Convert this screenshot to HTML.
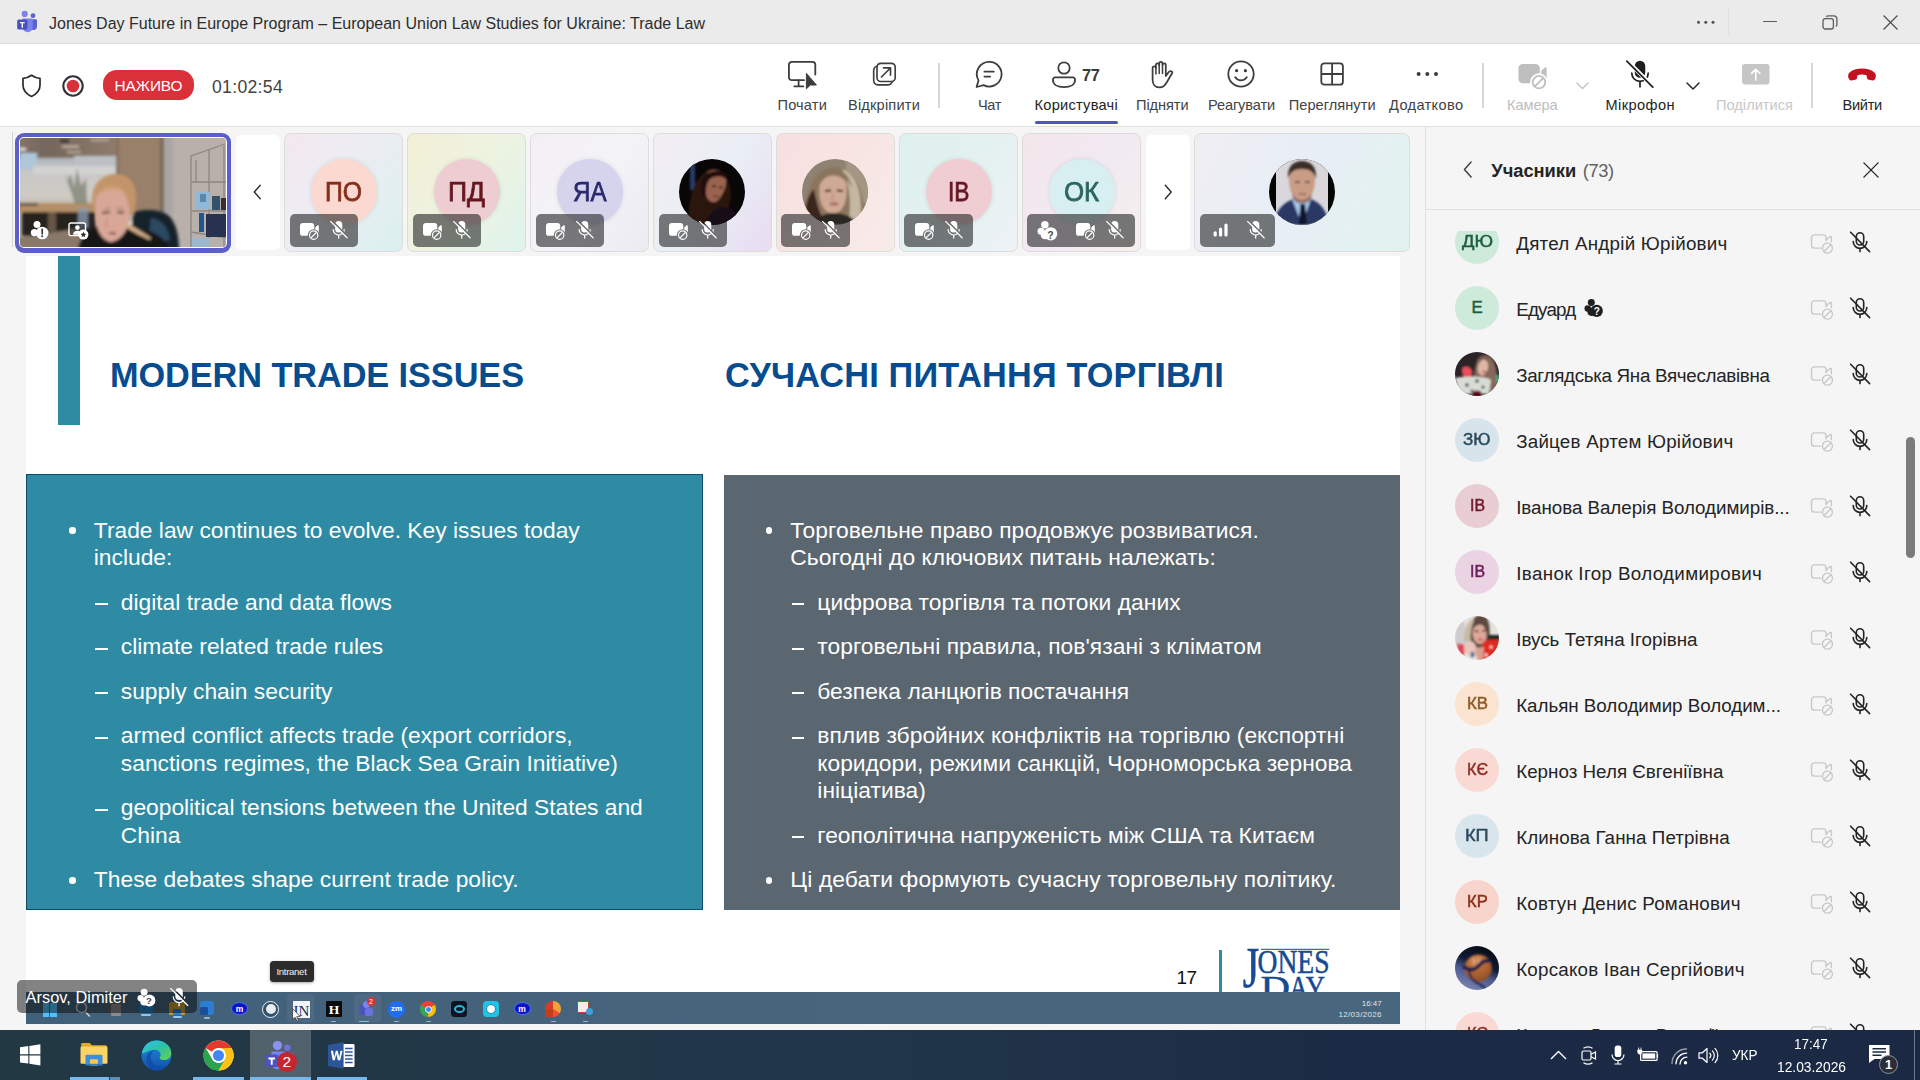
<!DOCTYPE html>
<html lang="uk"><head><meta charset="utf-8"><title>Teams</title>
<style>

*{box-sizing:border-box;margin:0;padding:0}
html,body{width:1920px;height:1080px;overflow:hidden}
body{position:relative;background:#f5f5f5;font-family:"Liberation Sans",sans-serif;color:#242424}
.a{position:absolute}
.t{position:absolute;white-space:nowrap}
svg{position:absolute;overflow:visible}
#titlebar{left:0;top:0;width:1920px;height:43px;background:#ebebeb}
#tbline{left:0;top:43px;width:1920px;height:1px;background:#dcdcdc}
#toolbar{left:0;top:44px;width:1920px;height:82px;background:#fff}
#toolline{left:0;top:126px;width:1920px;height:1px;background:#e0e0e0}
.vdiv{position:absolute;width:2px;background:#d6d6d6;top:63px;height:45px}
#slide{left:26px;top:256px;width:1374px;height:768px;background:#fff;overflow:hidden}
#panel{left:1426px;top:127px;width:494px;height:903px;background:#f5f5f5;overflow:hidden}
#panelline{left:1425px;top:127px;width:1px;height:903px;background:#e0e0e0}
#taskbar{left:0;top:1030px;width:1920px;height:50px;background:linear-gradient(90deg,#223843 0%,#21364a 45%,#1c2b45 70%,#1b2944 100%)}
.tile{position:absolute;top:133px;height:119px;border-radius:7px;border:1px solid #dcdcdc;overflow:hidden}
.av{position:absolute;border-radius:50%;text-align:center;overflow:hidden}
.pill{position:absolute;background:rgba(40,42,42,.62);border-radius:5px}

</style></head>
<body>

<svg width="0" height="0" style="position:absolute">
<defs>
<!-- mic off outline -->
<symbol id="i-micoff" viewBox="0 0 24 24">
 <g fill="none" stroke="currentColor" stroke-width="1.6" stroke-linecap="round" stroke-linejoin="round">
  <rect x="8.3" y="2.8" width="7.4" height="12.2" rx="3.7"/>
  <path d="M5.2 11.6a6.8 6.8 0 0 0 13.6 0"/>
  <path d="M12 18.6v3"/>
  <path d="M2.6 2.2L21.6 21.6"/>
 </g>
</symbol>
<!-- mic off filled (toolbar) -->
<symbol id="i-micoff-f" viewBox="0 0 28 28">
 <g fill="none" stroke="currentColor" stroke-width="1.7" stroke-linecap="round">
  <rect x="9.6" y="1.6" width="8.8" height="15.4" rx="4.4" fill="currentColor"/>
  <path d="M5.8 13.2a8.2 8.2 0 0 0 16.4 0"/>
  <path d="M14 21.6v5.2"/>
 </g>
 <path d="M1.2 0.8L27.2 26.8" stroke="#fff" stroke-width="4.2" stroke-linecap="round"/>
 <path d="M0.8 1.2L26.8 27.2" stroke="currentColor" stroke-width="1.7" stroke-linecap="round"/>
</symbol>
<!-- camera off outline (list) -->
<symbol id="i-camoff" viewBox="0 0 26 24">
 <g fill="none" stroke="currentColor" stroke-width="1.5" stroke-linejoin="round" stroke-linecap="round">
  <path d="M11.5 17.2H4.6a3 3 0 0 1-3-3V6.1a3 3 0 0 1 3-3h9.6a3 3 0 0 1 3 3v3.4"/>
  <path d="M17.2 8.2l4.4-3.4c.5-.4 1.2 0 1.200.6v5"/>
  <circle cx="18.6" cy="17.2" r="5.3"/>
  <path d="M14.9 20.9l7.4-7.4"/>
 </g>
</symbol>
<!-- camera off filled (tile / toolbar) -->
<symbol id="i-camoff-f" viewBox="0 0 20 18">
 <mask id="mk-cam"><rect x="-1" y="-1" width="22" height="20" fill="#fff"/><circle cx="14.100" cy="12.500" r="6.100" fill="#000"/></mask>
 <g mask="url(#mk-cam)" fill="currentColor">
  <rect x="0" y="0" width="14.700" height="13.200" rx="3"/>
  <path d="M15.700 4.700l2.500-2.300c.5-.5 1.200-.1 1.200.5v7.400c0 .6-.7 1-1.200.5l-2.500-2.300z"/>
 </g>
 <g fill="none" stroke="currentColor" stroke-width="1.250">
  <circle cx="14.100" cy="12.500" r="4.300"/>
  <path d="M11.100 15.500l6-6"/>
 </g>
</symbol>
<!-- mic off filled small (tiles) -->
<symbol id="i-micoff-w" viewBox="0 0 18 18">
 <mask id="mk-mic"><rect x="-1" y="-1" width="20" height="20" fill="#fff"/><path d="M1.600 -0.600L18.800 16.300" stroke="#000" stroke-width="1.700"/></mask>
 <g mask="url(#mk-mic)">
  <rect x="5.200" y="0" width="7.200" height="11.700" rx="3.600" fill="currentColor"/>
  <path d="M3.200 8.600a5.600 5.600 0 0 0 11.200 0M8.800 14.300v3.200" fill="none" stroke="currentColor" stroke-width="1.250" stroke-linecap="round"/>
 </g>
 <path d="M0.500 0.400L17.500 17.200" stroke="currentColor" stroke-width="1.250" stroke-linecap="round"/>
</symbol>
<!-- person with question badge -->
<symbol id="i-guest" viewBox="0 0 24 24">
 <circle cx="9" cy="5.4" r="4.3" fill="currentColor"/>
 <circle cx="4.600" cy="12.800" r="4" fill="currentColor"/>
 <circle cx="9.200" cy="17" r="5" fill="currentColor"/>
 <circle cx="15.600" cy="15.800" r="7.600" fill="currentColor"/>
</symbol>
<symbol id="i-chev-d" viewBox="0 0 14 8"><path d="M1 1l6 6 6-6" fill="none" stroke="currentColor" stroke-width="1.500" stroke-linecap="round" stroke-linejoin="round"/></symbol>
<symbol id="i-chev-l" viewBox="0 0 10 18"><path d="M8.500 1L1.500 9l7 8" fill="none" stroke="currentColor" stroke-width="1.600" stroke-linecap="round" stroke-linejoin="round"/></symbol>
<symbol id="i-chev-r" viewBox="0 0 10 18"><path d="M1.500 1L8.500 9l-7 8" fill="none" stroke="currentColor" stroke-width="1.600" stroke-linecap="round" stroke-linejoin="round"/></symbol>
<symbol id="i-x" viewBox="0 0 18 18"><path d="M1 1l16 16M17 1L1 17" fill="none" stroke="currentColor" stroke-width="1.500" stroke-linecap="round"/></symbol>
</defs>
</svg>

<div class="a" id="titlebar"></div><div class="a" id="tbline"></div>
<div class="a" id="toolbar"></div><div class="a" id="toolline"></div>
<svg class="a" style="left:15px;top:10px" width="24" height="23" viewBox="0 0 24 23">
 <circle cx="9.700" cy="3.900" r="3.100" fill="#7b83eb"/>
 <circle cx="18" cy="5.700" r="2.400" fill="#5b63d3"/>
 <path d="M14.500 9.300h6.300a1.200 1.200 0 0 1 1.200 1.200v5.800a3.700 3.700 0 0 1-3.700 3.700 3.700 3.700 0 0 1-3.800-3.400z" fill="#5b63d3"/>
 <path d="M7.600 8.600h8.800a1.300 1.300 0 0 1 1.300 1.300v7.300a5 5 0 0 1-10.100 0z" fill="#7b83eb"/>
 <rect x="2.200" y="9.400" width="10.200" height="10.200" rx="1.600" fill="#4850bf"/>
 <path d="M4.900 12h4.800v1.300H8v4.400H6.600v-4.400H4.900z" fill="#fff"/>
</svg>
<div class="t" style="left:49.00px;top:14.26px;font-size:16.00px;line-height:19.20px;letter-spacing:-0.004px;font-weight:400;color:#2e2e2e;font-family:'Liberation Sans',sans-serif;">Jones Day Future in Europe Program – European Union Law Studies for Ukraine: Trade Law</div>
<svg class="a" style="left:1696px;top:20px" width="20" height="5"><circle cx="2.500" cy="2.200" r="1.500" fill="#4f4f4f"/><circle cx="9.800" cy="2.200" r="1.500" fill="#4f4f4f"/><circle cx="17" cy="2.200" r="1.500" fill="#4f4f4f"/></svg>
<div class="a" style="left:1728px;top:8px;width:1px;height:26px;background:#dedede"></div>
<div class="a" style="left:1763px;top:20.500px;width:14px;height:1.300px;background:#5c5c5c"></div>
<svg class="a" style="left:1822px;top:14.500px" width="16" height="15" viewBox="0 0 16 15"><rect x="1" y="3.600" width="10.400" height="10.400" rx="2.300" fill="none" stroke="#5c5c5c" stroke-width="1.300"/><path d="M4.300 1.800A2.400 2.400 0 0 1 6.300 0.800h5.400a3.200 3.200 0 0 1 3.200 3.200v5.400a2.400 2.400 0 0 1-1 2" fill="none" stroke="#5c5c5c" stroke-width="1.300"/></svg>
<svg class="a" style="left:1882.500px;top:14.500px" width="15" height="15" viewBox="0 0 15 15"><path d="M0.500 0.500l14 14M14.500 0.500l-14 14" stroke="#505050" stroke-width="1.300" fill="none"/></svg>
<svg class="a" style="left:21px;top:74px" width="21" height="24" viewBox="0 0 21 24"><path d="M10.500 1.300c2.700 2 5.500 2.900 8.500 3v7c0 5-3.300 8.700-8.500 11.200C5.300 20 2 16.300 2 11.300v-7c3-.1 5.800-1 8.500-3z" fill="none" stroke="#2b2b2b" stroke-width="1.700" stroke-linejoin="round"/></svg>
<svg class="a" style="left:61px;top:74px" width="24" height="24" viewBox="0 0 24 24"><circle cx="12" cy="12" r="9.700" fill="#fff" stroke="#33333a" stroke-width="2.100"/><circle cx="12" cy="12" r="6.300" fill="#d6303a"/></svg>
<div class="a" style="left:103px;top:70px;width:91px;height:30px;border-radius:14px;background:#d93039"></div>
<div class="t" style="left:114.50px;top:77.02px;font-size:15.40px;line-height:18.48px;letter-spacing:-0.070px;font-weight:400;color:#fff;font-family:'Liberation Sans',sans-serif;">НАЖИВО</div>
<div class="t" style="left:212.00px;top:77.04px;font-size:17.60px;line-height:21.12px;letter-spacing:0.311px;font-weight:400;color:#424242;font-family:'Liberation Sans',sans-serif;">01:02:54</div>
<div class="t" style="left:777.50px;top:97.48px;font-size:14.60px;line-height:17.52px;letter-spacing:0.160px;font-weight:400;color:#424242;font-family:'Liberation Sans',sans-serif;">Почати</div>
<div class="t" style="left:848.00px;top:97.48px;font-size:14.60px;line-height:17.52px;letter-spacing:0.184px;font-weight:400;color:#424242;font-family:'Liberation Sans',sans-serif;">Відкріпити</div>
<div class="t" style="left:978.00px;top:97.48px;font-size:14.60px;line-height:17.52px;letter-spacing:-0.406px;font-weight:400;color:#424242;font-family:'Liberation Sans',sans-serif;">Чат</div>
<div class="t" style="left:1034.50px;top:97.48px;font-size:14.60px;line-height:17.52px;letter-spacing:0.264px;font-weight:400;color:#242424;font-family:'Liberation Sans',sans-serif;">Користувачі</div>
<div class="t" style="left:1136.00px;top:97.48px;font-size:14.60px;line-height:17.52px;letter-spacing:-0.081px;font-weight:400;color:#424242;font-family:'Liberation Sans',sans-serif;">Підняти</div>
<div class="t" style="left:1208.00px;top:97.48px;font-size:14.60px;line-height:17.52px;letter-spacing:-0.133px;font-weight:400;color:#424242;font-family:'Liberation Sans',sans-serif;">Реагувати</div>
<div class="t" style="left:1288.70px;top:97.48px;font-size:14.60px;line-height:17.52px;letter-spacing:0.046px;font-weight:400;color:#424242;font-family:'Liberation Sans',sans-serif;">Переглянути</div>
<div class="t" style="left:1389.00px;top:97.48px;font-size:14.60px;line-height:17.52px;letter-spacing:0.351px;font-weight:400;color:#424242;font-family:'Liberation Sans',sans-serif;">Додатково</div>
<div class="t" style="left:1507.00px;top:97.48px;font-size:14.60px;line-height:17.52px;letter-spacing:-0.087px;font-weight:400;color:#bdbdbd;font-family:'Liberation Sans',sans-serif;">Камера</div>
<div class="t" style="left:1605.50px;top:97.48px;font-size:14.60px;line-height:17.52px;letter-spacing:0.409px;font-weight:400;color:#242424;font-family:'Liberation Sans',sans-serif;">Мікрофон</div>
<div class="t" style="left:1716.00px;top:97.48px;font-size:14.60px;line-height:17.52px;letter-spacing:0.022px;font-weight:400;color:#c7c7c7;font-family:'Liberation Sans',sans-serif;">Поділитися</div>
<div class="t" style="left:1842.50px;top:97.48px;font-size:14.60px;line-height:17.52px;letter-spacing:-0.279px;font-weight:400;color:#242424;font-family:'Liberation Sans',sans-serif;">Вийти</div>
<div class="vdiv" style="left:938px"></div>
<div class="vdiv" style="left:1482px"></div>
<div class="vdiv" style="left:1810.5px"></div>
<div class="a" style="left:1034.500px;top:120.500px;width:83.500px;height:3px;border-radius:2px;background:#5057b8"></div>
<svg class="a" style="left:787px;top:60px" width="32" height="31" viewBox="0 0 32 31">
 <g fill="none" stroke="#3d3d3d" stroke-width="1.800" stroke-linecap="round" stroke-linejoin="round">
 <path d="M17 20.200H4.800A2.900 2.900 0 0 1 1.900 17.300V4.800A2.900 2.900 0 0 1 4.800 1.900h20.600a2.900 2.900 0 0 1 2.900 2.900v9.800"/>
 <path d="M11.600 20.400v5.800M7.300 26.400h9"/></g>
 <path d="M19.400 13.400v15.400l4-3.800h6z" fill="#3d3d3d" stroke="#3d3d3d" stroke-width="1" stroke-linejoin="round"/>
</svg>
<svg class="a" style="left:871px;top:61px" width="26" height="26" viewBox="0 0 26 26">
 <g fill="none" stroke="#3d3d3d" stroke-width="1.650" stroke-linecap="round" stroke-linejoin="round">
 <rect x="2.700" y="5.200" width="18.600" height="18.600" rx="4.200"/>
 <rect x="6" y="2.300" width="18.200" height="18.200" rx="3.800" fill="#fff"/>
 <path d="M10.400 16l9-9M12.500 6.900h7v7.300"/></g>
</svg>
<svg class="a" style="left:974px;top:60px" width="30" height="29" viewBox="0 0 30 29">
 <g fill="none" stroke="#3d3d3d" stroke-width="1.800" stroke-linecap="round" stroke-linejoin="round">
 <path d="M15.300 1.900a12.300 12.300 0 1 1-5.700 23.200L2.600 27l1.900-6.600A12.300 12.300 0 0 1 15.300 1.900z"/>
 <path d="M10.400 11.700h9.400M10.400 16.600h5.800"/></g>
</svg>
<svg class="a" style="left:1051px;top:60px" width="26" height="29" viewBox="0 0 26 29">
 <g fill="none" stroke="#3d3d3d" stroke-width="1.800" stroke-linejoin="round">
 <circle cx="13" cy="8" r="5.700"/>
 <path d="M4.200 17.400h17.600a2.300 2.300 0 0 1 2.300 2.300c0 4.800-4.600 7.400-11.100 7.400S1.900 24.500 1.900 19.700a2.300 2.300 0 0 1 2.300-2.300z"/></g>
</svg>
<div class="t" style="left:1082.00px;top:65.68px;font-size:16.40px;line-height:19.68px;letter-spacing:-0.371px;font-weight:700;color:#3b3b3b;font-family:'Liberation Sans',sans-serif;">77</div>
<svg class="a" style="left:1150px;top:60px" width="26" height="29" viewBox="0 0 26 29">
 <path fill="none" stroke="#3d3d3d" stroke-width="1.750" stroke-linecap="round" stroke-linejoin="round"
 d="M2.600 15.400V8a1.600 1.600 0 0 1 3.300 0V5a1.650 1.650 0 0 1 3.300 0V3.500a1.650 1.650 0 0 1 3.300 0V5a1.650 1.650 0 0 1 3.300 0v11l2.600-3.600c.8-1.100 2.200-1.500 3.400-.8.600.4.700 1 .3 1.600l-5.600 9.600c-1.400 2.500-3.400 4.600-6.600 4.600h-.8c-3.800 0-6.500-3-6.500-7.600z"/>
 <g fill="none" stroke="#3d3d3d" stroke-width="1.500" stroke-linecap="round"><path d="M5.900 8v6M9.200 5v8.600M12.500 5v8.600"/></g>
</svg>
<svg class="a" style="left:1226px;top:59px" width="30" height="30" viewBox="0 0 30 30">
 <circle cx="15" cy="15" r="12.700" fill="none" stroke="#3d3d3d" stroke-width="1.800"/>
 <circle cx="10.600" cy="11.700" r="1.600" fill="#3d3d3d"/><circle cx="19.400" cy="11.700" r="1.600" fill="#3d3d3d"/>
 <path d="M9.200 18.300a7 7 0 0 0 11.600 0" fill="none" stroke="#3d3d3d" stroke-width="1.800" stroke-linecap="round"/>
</svg>
<svg class="a" style="left:1319px;top:61px" width="26" height="26" viewBox="0 0 26 26">
 <g fill="none" stroke="#3d3d3d" stroke-width="1.800"><rect x="2.300" y="2.300" width="21.600" height="21.400" rx="3"/>
 <path d="M13.100 2.300v21.400M2.300 13h21.600"/></g></svg>
<svg class="a" style="left:1414px;top:70px" width="26" height="8"><circle cx="4.600" cy="4" r="2" fill="#3d3d3d"/><circle cx="13.300" cy="4" r="2" fill="#3d3d3d"/><circle cx="22" cy="4" r="2" fill="#3d3d3d"/></svg>
<svg class="a" style="left:1518.00px;top:63.80px;color:#bfbfbf;" width="30.00" height="26.20"><use href="#i-camoff-f" width="30.00" height="26.20"/></svg>
<svg class="a" style="left:1575.70px;top:82.00px;color:#c2c2c2;" width="13.00" height="7.40"><use href="#i-chev-d" width="13.00" height="7.40"/></svg>
<svg class="a" style="left:1626.00px;top:60.00px;color:#1f1f1f;" width="28.00" height="28.00"><use href="#i-micoff-f" width="28.00" height="28.00"/></svg>
<svg class="a" style="left:1686.00px;top:82.00px;color:#2b2b2b;" width="14.00" height="8.00"><use href="#i-chev-d" width="14.00" height="8.00"/></svg>
<svg class="a" style="left:1741.500px;top:64px" width="27.500" height="20.500" viewBox="0 0 27.500 20.500">
 <rect x="0" y="0" width="27.500" height="20.500" rx="3" fill="#c6c6c6"/>
 <path d="M13.750 16V5.600M9.600 9.400l4.150-4.100 4.150 4.100" fill="none" stroke="#fff" stroke-width="1.700" stroke-linecap="round" stroke-linejoin="round"/></svg>
<svg class="a" style="left:1848px;top:67.500px" width="28" height="13" viewBox="0 0 28 13">
 <path fill="#c4111f" d="M14 .6c5 0 9.700 1.400 12.600 4.200 1.300 1.300 1.700 3.400.9 5.200l-.5 1.100c-.4 1-1.400 1.500-2.400 1.300l-3.800-.7c-.9-.2-1.600-.9-1.800-1.800l-.5-2.600c-1.400-.6-2.900-.8-4.500-.8s-3.100.200-4.500.8l-.5 2.600c-.2.900-.9 1.600-1.800 1.800l-3.800.7c-1 .2-2-.3-2.400-1.300l-.5-1.100C-.3 8.200.1 6.100 1.400 4.800 4.300 2 9 .6 14 .6z"/></svg>
<div class="a" style="left:12px;top:132px;width:1px;height:115px;background:#d2d2d2"></div>
<div class="a" style="left:15px;top:133px;width:216px;height:119.500px;border-radius:9px;background:#5b5fc7"></div>
<div class="a" style="left:19px;top:137px;width:208px;height:111px;border-radius:5px;background:#fff"></div>
<svg class="a" style="left:20px;top:138px;border-radius:4px;overflow:hidden" width="206" height="109" viewBox="0 0 206 109">
<defs><filter id="b1" x="-10%" y="-10%" width="120%" height="120%"><feGaussianBlur stdDeviation="1.400"/></filter>
<filter id="b2" x="-10%" y="-10%" width="120%" height="120%"><feGaussianBlur stdDeviation="0.700"/></filter>
<linearGradient id="gl" x1="0" y1="0" x2="0" y2="1"><stop offset="0" stop-color="#aeb4ba"/><stop offset=".3" stop-color="#c8c8c8"/><stop offset=".8" stop-color="#cfcbc5"/><stop offset="1" stop-color="#c2b5a3"/></linearGradient>
<linearGradient id="ce" x1="0" y1="0" x2="1" y2="0"><stop offset="0" stop-color="#85766a"/><stop offset=".3" stop-color="#75665a"/><stop offset="1" stop-color="#8f7c6b"/></linearGradient></defs>
<rect width="206" height="109" fill="#b5ada6"/>
<g filter="url(#b1)">
 <rect x="-4" y="-4" width="102" height="28" fill="url(#ce)"/>
 <rect x="-4" y="20" width="100" height="48" fill="url(#gl)"/>
 <rect x="-4" y="10" width="10" height="2.500" fill="#e8e4de"/><rect x="42" y="7.500" width="17" height="2.200" fill="#c4b8ab"/><rect x="71" y="1" width="18" height="2" fill="#b8a99b"/><rect x="47" y="13" width="14" height="2" fill="#b5a79a"/>
 <rect x="40" y="1" width="9" height="4" fill="#3b3b38"/>
 <rect x="54" y="18" width="42" height="14" fill="#bcc0c5"/>
 <rect x="0" y="15" width="17" height="16" fill="#afc6da"/>
 <rect x="13" y="28" width="82" height="8" fill="#d9d8d6" opacity=".7"/>
 <rect x="96" y="-4" width="48" height="80" fill="#98806a"/>
 <rect x="96" y="-4" width="3" height="80" fill="#86705c"/>
 <rect x="140" y="-4" width="5" height="80" fill="#7b6958"/>
 <rect x="144" y="-4" width="66" height="117" fill="#b8b0a9"/>
 <rect x="144" y="-4" width="9" height="80" fill="#aaa5a5"/>
 <rect x="-4" y="65" width="100" height="10" fill="#b38f67"/>
 <rect x="-4" y="65" width="22" height="2.500" fill="#4a3c32"/>
 <rect x="2" y="74" width="74" height="24" fill="#26221f"/>
 <rect x="28" y="74" width="8" height="20" fill="#665647"/>
 <path d="M-4 100L62 90V113H-4z" fill="#8a7968"/>
 <path d="M44 34l4 8 3-6 3 14 3-20 4 18 5-8 1 26h-12l-6-18z" fill="#7e8072" opacity=".75"/>
 <rect x="58" y="70" width="10" height="20" fill="#8a9ab0" opacity=".8"/>
</g>
<g filter="url(#b2)" fill="none" stroke="#8b8782" stroke-width="1.300">
 <path d="M171 111V18l34-12M171 44h36M171 73h36M171 94l36 6M189 12v100M176 22v22M204 8v100"/>
</g>
<g filter="url(#b2)">
 <rect x="176" y="54" width="14" height="17" fill="#8fb9d8"/><rect x="180" y="56" width="6" height="8" fill="#5a86ad"/><rect x="192" y="58" width="8" height="14" fill="#33536e"/><rect x="201" y="60" width="5" height="12" fill="#3a2f33"/>
 <rect x="179" y="75" width="5" height="19" fill="#235690"/><rect x="186" y="76" width="22" height="23" fill="#283350"/>
 <rect x="172" y="100" width="18" height="9" fill="#9db7cf"/>
</g>
<g filter="url(#b1)">
 <path d="M114 74c14-4 31-2 37 6 6 8 8 20 8 33h-52z" fill="#19212a"/>
 <path d="M131 80c10 1 17 9 19 22l-22 3z" fill="#2b4862"/>
 <path d="M58 113c2-12 8-22 20-26l42 4c16 2 26 10 30 22z" fill="#141518"/>
 <path d="M72 62c0-17 11-26 24-26 12 0 20 8 20 24 0 6-1 12-3 16l-38 0z" fill="#c3946b"/>
 <path d="M76 58c6-8 19-9 27-5 6 10 8 22 6 32-3 10-10 18-18 19-8-1-14-10-16-24z" fill="#d9a797"/>
 <path d="M76 60c5-8 18-10 28-6-4-8-22-10-28 6z" fill="#cfa078"/>
 <path d="M106 84c8 5 18 11 25 16l-1 2c-9-4-19-9-26-14z" fill="#d2ad88"/>
 <circle cx="110.500" cy="85" r="1.800" fill="#efe3dc"/>
 <path d="M82 75l8-1M97 74l7 .5" stroke="#4d3c3a" stroke-width="2"/>
 <path d="M84 71l7-1.500M96 69.500l8 1" stroke="#9c7a5c" stroke-width="1.200"/>
 <path d="M89 95l7 .5" stroke="#7e3f3f" stroke-width="2.200"/>
 <path d="M88 80l-3 8 4 1" stroke="#c48f80" stroke-width="1.500" fill="none"/>
</g>
</svg>
<svg class="a" style="left:30px;top:220px" width="20" height="20" viewBox="0 0 20 20">
 <circle cx="7" cy="4.600" r="3.500" fill="#fff"/><circle cx="4.400" cy="12.600" r="3.600" fill="#fff"/>
 <circle cx="12.200" cy="13" r="6.300" fill="#fff"/><path d="M12.200 9.400v4.400" stroke="#3a3a3a" stroke-width="1.700" stroke-linecap="round"/><circle cx="12.200" cy="16.200" r="1" fill="#3a3a3a"/></svg>
<svg class="a" style="left:68px;top:222px" width="22" height="19" viewBox="0 0 22 19">
 <rect x="1" y="1" width="16.500" height="12.600" rx="1.800" fill="rgba(40,40,40,.55)" stroke="#fff" stroke-width="1.400"/>
 <circle cx="9.400" cy="5.600" r="2.300" fill="#fff"/><path d="M5 12.800c0-2.800 1.800-4 4.400-4s4.400 1.200 4.400 4z" fill="#fff"/>
 <circle cx="15.400" cy="12.600" r="5" fill="#fff"/><path d="M15.400 9.700l.9 1.900 2 .3-1.500 1.400.4 2-1.800-1-1.800 1 .4-2-1.500-1.400 2-.3z" fill="#333"/></svg>
<div class="a" style="left:235.500px;top:135px;width:44px;height:115px;border-radius:5px;background:#fff"></div>
<svg class="a" style="left:252.50px;top:184.00px;color:#2b2b2b;" width="8.50" height="16.00"><use href="#i-chev-l" width="8.50" height="16.00"/></svg>
<div class="a" style="left:1146px;top:135px;width:44px;height:115px;border-radius:5px;background:#fff"></div>
<svg class="a" style="left:1164.00px;top:184.00px;color:#2b2b2b;" width="8.50" height="16.00"><use href="#i-chev-r" width="8.50" height="16.00"/></svg>
<div class="tile" style="left:284px;width:119px;background:linear-gradient(125deg,#f3e8ee 0%,#edecf3 40%,#e3eff1 75%,#d9f0ee 100%)"></div>
<div class="av" style="left:310.5px;top:159px;width:66px;height:66px;background:#fbd9d1;box-shadow:0 0 5px rgba(0,0,0,.10)"></div>
<div class="t" style="left:325.00px;top:176.13px;font-size:26.80px;line-height:32.16px;letter-spacing:0.000px;font-weight:400;color:#84301a;font-family:'Liberation Sans',sans-serif;transform:scaleX(0.9225);transform-origin:0 50%;-webkit-text-stroke:0.750px #84301a;">ПО</div>
<div class="tile" style="left:407px;width:119px;background:linear-gradient(125deg,#f3efd6 0%,#eef3e0 45%,#dff3ec 100%)"></div>
<div class="av" style="left:433.5px;top:159px;width:66px;height:66px;background:#eecdd2;box-shadow:0 0 5px rgba(0,0,0,.10)"></div>
<div class="t" style="left:448.00px;top:176.13px;font-size:26.80px;line-height:32.16px;letter-spacing:0.000px;font-weight:400;color:#66161f;font-family:'Liberation Sans',sans-serif;transform:scaleX(0.9890);transform-origin:0 50%;-webkit-text-stroke:0.750px #66161f;">ПД</div>
<div class="tile" style="left:530px;width:119px;background:linear-gradient(125deg,#f3f0f5 0%,#f4f3f7 50%,#ecebf3 100%)"></div>
<div class="av" style="left:556.5px;top:159px;width:66px;height:66px;background:#d6d4ec;box-shadow:0 0 5px rgba(0,0,0,.10)"></div>
<div class="t" style="left:572.75px;top:176.13px;font-size:26.80px;line-height:32.16px;letter-spacing:0.000px;font-weight:400;color:#2b2a6e;font-family:'Liberation Sans',sans-serif;transform:scaleX(0.8998);transform-origin:0 50%;-webkit-text-stroke:0.750px #2b2a6e;">ЯА</div>
<div class="tile" style="left:653px;width:119px;background:linear-gradient(125deg,#f3eef4 0%,#eaeef5 50%,#e8dcf1 100%)"></div>
<div class="tile" style="left:776px;width:119px;background:linear-gradient(125deg,#f7dfe1 0%,#f7e6e3 55%,#f7ecea 100%)"></div>
<div class="tile" style="left:899px;width:119px;background:linear-gradient(125deg,#dff1ef 0%,#e3f1f0 45%,#eef2f6 100%)"></div>
<div class="av" style="left:925.5px;top:159px;width:66px;height:66px;background:#efcdd2;box-shadow:0 0 5px rgba(0,0,0,.10)"></div>
<div class="t" style="left:947.75px;top:176.13px;font-size:26.80px;line-height:32.16px;letter-spacing:0.000px;font-weight:400;color:#651524;font-family:'Liberation Sans',sans-serif;transform:scaleX(0.8491);transform-origin:0 50%;-webkit-text-stroke:0.750px #651524;">ІВ</div>
<div class="tile" style="left:1022px;width:119px;background:linear-gradient(125deg,#f4e6ea 0%,#f1e9f3 50%,#f5f0ec 100%)"></div>
<div class="av" style="left:1048.5px;top:159px;width:66px;height:66px;background:#d8eff2;box-shadow:0 0 5px rgba(0,0,0,.10)"></div>
<div class="t" style="left:1063.90px;top:176.13px;font-size:26.80px;line-height:32.16px;letter-spacing:0.000px;font-weight:400;color:#2a665f;font-family:'Liberation Sans',sans-serif;transform:scaleX(0.9655);transform-origin:0 50%;-webkit-text-stroke:0.750px #2a665f;">ОК</div>
<div class="tile" style="left:1194px;width:216px;background:linear-gradient(115deg,#f0eef3 0%,#e8eef6 45%,#e1f3ee 100%)"></div>
<div class="pill" style="left:290.2px;top:214px;width:67.7px;height:33px"></div>
<div class="pill" style="left:413.1px;top:214px;width:67.8px;height:33px"></div>
<div class="pill" style="left:536.1px;top:214px;width:67.8px;height:33px"></div>
<div class="pill" style="left:659.1px;top:214px;width:67.7px;height:33px"></div>
<div class="pill" style="left:781.3px;top:214px;width:68.5px;height:33px"></div>
<div class="pill" style="left:904.1px;top:214px;width:68.8px;height:33px"></div>
<div class="pill" style="left:1027.0px;top:214px;width:108.0px;height:33px"></div>
<div class="pill" style="left:1200.2px;top:214px;width:74.8px;height:33px"></div>
<svg class="a" style="left:679px;top:159px" width="66" height="66" viewBox="0 0 66 66"><defs><clipPath id="c4"><circle cx="33" cy="33" r="33"/></clipPath><filter id="b3"><feGaussianBlur stdDeviation="1.200"/></filter></defs>
<g clip-path="url(#c4)"><rect width="66" height="66" fill="#080607"/><g filter="url(#b3)">
<rect x="11" y="5" width="5" height="26" fill="#2c3a68"/>
<path d="M10 66c-2-22 4-50 22-56 14-2 20 12 20 28l-6 28z" fill="#2b1611"/>
<path d="M27 14c6-5 16-3 19 4 2 8-1 18-6 24-5 3-10 0-12-6-2-7-3-16-1-22z" fill="#9a6450" transform="rotate(8 36 26)"/>
<path d="M22 24c2-12 18-16 26-8l1 6c-5-6-12-6-18-2-4 4-5 12-3 22-4-4-7-10-6-18z" fill="#24110c"/>
<path d="M33 27l4 .5M40 28l4 1" stroke="#2a1510" stroke-width="1.300"/><path d="M34 37l6 1" stroke="#6f3a34" stroke-width="1.500"/>
<path d="M26 66c2-10 8-16 16-18l10 2c6 4 8 10 8 16z" fill="#151113"/></g></g></svg>
<svg class="a" style="left:802px;top:159px" width="66" height="66" viewBox="0 0 66 66"><defs><clipPath id="c5"><circle cx="33" cy="33" r="33"/></clipPath></defs>
<g clip-path="url(#c5)"><rect width="66" height="66" fill="#8e8272"/><g filter="url(#b3)">
<rect x="44" y="0" width="24" height="44" fill="#a39683"/>
<path d="M4 66c-4-26 4-56 28-58 22 0 32 26 30 58z" fill="#8c765f"/>
<path d="M40 10c14 4 22 24 18 56h-12c4-20 2-40-6-56z" fill="#c4b8a2"/>
<path d="M4 66c-2-14 0-28 8-36 2 12 6 26 12 36z" fill="#3a281f"/>
<path d="M18 24c4-10 22-10 26 0 2 10 0 22-6 28-4 3-10 3-14 0-6-6-8-18-6-28z" fill="#cfa993"/>
<path d="M14 34c0-18 10-24 18-24s16 6 18 20c-4-10-10-14-18-14s-14 6-18 18z" fill="#8a745e"/>
<path d="M10 66c4-8 12-12 22-12s20 4 24 12z" fill="#2a2523"/>
<path d="M23 32l6-.5M35 31.500l6 .5" stroke="#3e2a22" stroke-width="1.800"/><path d="M28 45l8 0" stroke="#a0605a" stroke-width="2.400"/><path d="M31 34l-1 7 3 .5" stroke="#b78f7c" stroke-width="1.200" fill="none"/></g></g></svg>
<svg class="a" style="left:1269px;top:159px" width="66" height="66" viewBox="0 0 66 66"><defs><clipPath id="c8"><circle cx="33" cy="33" r="33"/></clipPath></defs>
<g clip-path="url(#c8)"><rect width="66" height="66" fill="#050506"/><rect x="7" y="0" width="52" height="66" fill="#d9d7dc"/><g filter="url(#b3)">
<path d="M4 66c2-14 10-22 20-26l18 0c10 4 16 12 18 26z" fill="#2b3964"/>
<path d="M23 40l10 26 9-26z" fill="#a6c6ec"/><path d="M31.500 45h4.500l2 21h-8.500z" fill="#10182f"/>
<path d="M20 20c0-9 6-14 13-14s13 5 13 14c0 10-3 20-13 24-10-4-13-14-13-24z" fill="#c99c86"/>
<path d="M19 20c-1-12 5-18 14-18s15 6 14 18c-2-7-6-10-14-10s-12 3-14 10z" fill="#3a2d28"/>
<path d="M23 34c4 9 16 9 20 0l-1 6c-4 6-14 6-18 0z" fill="#94756a"/>
<path d="M26 23l5 0M36 23l5 0" stroke="#4b3a34" stroke-width="1.500"/><path d="M30 35l7 0" stroke="#8e5a52" stroke-width="1.300"/></g></g></svg>
<svg class="a" style="left:299.80px;top:223.00px;color:#fff;" width="19.40" height="17.50"><use href="#i-camoff-f" width="19.40" height="17.50"/></svg>
<svg class="a" style="left:330.00px;top:221.00px;color:#fff;" width="17.80" height="17.80"><use href="#i-micoff-w" width="17.80" height="17.80"/></svg>
<svg class="a" style="left:422.80px;top:223.00px;color:#fff;" width="19.40" height="17.50"><use href="#i-camoff-f" width="19.40" height="17.50"/></svg>
<svg class="a" style="left:453.00px;top:221.00px;color:#fff;" width="17.80" height="17.80"><use href="#i-micoff-w" width="17.80" height="17.80"/></svg>
<svg class="a" style="left:545.80px;top:223.00px;color:#fff;" width="19.40" height="17.50"><use href="#i-camoff-f" width="19.40" height="17.50"/></svg>
<svg class="a" style="left:576.00px;top:221.00px;color:#fff;" width="17.80" height="17.80"><use href="#i-micoff-w" width="17.80" height="17.80"/></svg>
<svg class="a" style="left:668.80px;top:223.00px;color:#fff;" width="19.40" height="17.50"><use href="#i-camoff-f" width="19.40" height="17.50"/></svg>
<svg class="a" style="left:699.00px;top:221.00px;color:#fff;" width="17.80" height="17.80"><use href="#i-micoff-w" width="17.80" height="17.80"/></svg>
<svg class="a" style="left:791.80px;top:223.00px;color:#fff;" width="19.40" height="17.50"><use href="#i-camoff-f" width="19.40" height="17.50"/></svg>
<svg class="a" style="left:822.00px;top:221.00px;color:#fff;" width="17.80" height="17.80"><use href="#i-micoff-w" width="17.80" height="17.80"/></svg>
<svg class="a" style="left:914.80px;top:223.00px;color:#fff;" width="19.40" height="17.50"><use href="#i-camoff-f" width="19.40" height="17.50"/></svg>
<svg class="a" style="left:945.00px;top:221.00px;color:#fff;" width="17.80" height="17.80"><use href="#i-micoff-w" width="17.80" height="17.80"/></svg>
<svg class="a" style="left:1037.00px;top:220.00px;color:#fff;" width="21.00" height="21.00"><use href="#i-guest" width="21.00" height="21.00"/></svg>
<div class="t" style="left:1047.29px;top:229.06px;font-size:10.50px;line-height:12.60px;letter-spacing:0.000px;font-weight:700;color:#4a4a4a;font-family:'Liberation Sans',sans-serif;">?</div>
<svg class="a" style="left:1076.00px;top:223.00px;color:#fff;" width="19.40" height="17.50"><use href="#i-camoff-f" width="19.40" height="17.50"/></svg>
<svg class="a" style="left:1106.00px;top:221.00px;color:#fff;" width="17.80" height="17.80"><use href="#i-micoff-w" width="17.80" height="17.80"/></svg>
<svg class="a" style="left:1212px;top:222px" width="18" height="16" viewBox="0 0 18 16"><g stroke="#fff" stroke-width="3.200" stroke-linecap="round"><path d="M3.200 13V10.800M8.600 13V7.200M14 13V3"/></g></svg>
<svg class="a" style="left:1247.00px;top:221.00px;color:#fff;" width="17.80" height="17.80"><use href="#i-micoff-w" width="17.80" height="17.80"/></svg>
<div class="a" id="slide"></div>
<div class="a" style="left:58px;top:256px;width:22px;height:169px;background:#2e8ba1"></div>
<div class="t" style="left:110.00px;top:354.54px;font-size:34.30px;line-height:41.16px;letter-spacing:-0.077px;font-weight:700;color:#064c8f;font-family:'Liberation Sans',sans-serif;">MODERN TRADE ISSUES</div>
<div class="t" style="left:725.00px;top:354.54px;font-size:34.30px;line-height:41.16px;letter-spacing:0.166px;font-weight:700;color:#064c8f;font-family:'Liberation Sans',sans-serif;">СУЧАСНІ ПИТАННЯ ТОРГІВЛІ</div>
<div class="a" style="left:26px;top:474px;width:677px;height:436px;background:#2e8ba3;border:1.500px solid #0f4a6a"></div>
<div class="a" style="left:724px;top:475px;width:676px;height:435px;background:#5a6670"></div>
<div class="t" style="left:93.80px;top:516.52px;font-size:22.80px;line-height:27.36px;letter-spacing:0.004px;font-weight:400;color:#fff;font-family:'Liberation Sans',sans-serif;">Trade law continues to evolve. Key issues today</div>
<div class="a" style="left:69.3px;top:527.4px;width:6.400px;height:6.400px;border-radius:50%;background:#fff"></div>
<div class="t" style="left:93.80px;top:543.92px;font-size:22.80px;line-height:27.36px;letter-spacing:0.000px;font-weight:400;color:#fff;font-family:'Liberation Sans',sans-serif;">include:</div>
<div class="t" style="left:120.80px;top:588.52px;font-size:22.80px;line-height:27.36px;letter-spacing:0.000px;font-weight:400;color:#fff;font-family:'Liberation Sans',sans-serif;">digital trade and data flows</div>
<div class="a" style="left:95.2px;top:603.0px;width:12.600px;height:2px;background:#fff"></div>
<div class="t" style="left:120.80px;top:633.12px;font-size:22.80px;line-height:27.36px;letter-spacing:0.000px;font-weight:400;color:#fff;font-family:'Liberation Sans',sans-serif;">climate related trade rules</div>
<div class="a" style="left:95.2px;top:648.0px;width:12.600px;height:2px;background:#fff"></div>
<div class="t" style="left:120.80px;top:677.72px;font-size:22.80px;line-height:27.36px;letter-spacing:0.000px;font-weight:400;color:#fff;font-family:'Liberation Sans',sans-serif;">supply chain security</div>
<div class="a" style="left:95.2px;top:692.0px;width:12.600px;height:2px;background:#fff"></div>
<div class="t" style="left:120.80px;top:722.32px;font-size:22.80px;line-height:27.36px;letter-spacing:0.000px;font-weight:400;color:#fff;font-family:'Liberation Sans',sans-serif;">armed conflict affects trade (export corridors,</div>
<div class="a" style="left:95.2px;top:737.0px;width:12.600px;height:2px;background:#fff"></div>
<div class="t" style="left:120.80px;top:749.72px;font-size:22.80px;line-height:27.36px;letter-spacing:0.005px;font-weight:400;color:#fff;font-family:'Liberation Sans',sans-serif;">sanctions regimes, the Black Sea Grain Initiative)</div>
<div class="t" style="left:120.80px;top:794.32px;font-size:22.80px;line-height:27.36px;letter-spacing:-0.029px;font-weight:400;color:#fff;font-family:'Liberation Sans',sans-serif;">geopolitical tensions between the United States and</div>
<div class="a" style="left:95.2px;top:809.0px;width:12.600px;height:2px;background:#fff"></div>
<div class="t" style="left:120.80px;top:821.72px;font-size:22.80px;line-height:27.36px;letter-spacing:0.000px;font-weight:400;color:#fff;font-family:'Liberation Sans',sans-serif;">China</div>
<div class="t" style="left:93.80px;top:866.32px;font-size:22.80px;line-height:27.36px;letter-spacing:0.020px;font-weight:400;color:#fff;font-family:'Liberation Sans',sans-serif;">These debates shape current trade policy.</div>
<div class="a" style="left:69.3px;top:877.2px;width:6.400px;height:6.400px;border-radius:50%;background:#fff"></div>
<div class="t" style="left:790.30px;top:516.52px;font-size:22.80px;line-height:27.36px;letter-spacing:0.098px;font-weight:400;color:#fff;font-family:'Liberation Sans',sans-serif;">Торговельне право продовжує розвиватися.</div>
<div class="a" style="left:765.8px;top:527.4px;width:6.400px;height:6.400px;border-radius:50%;background:#fff"></div>
<div class="t" style="left:790.30px;top:543.92px;font-size:22.80px;line-height:27.36px;letter-spacing:0.050px;font-weight:400;color:#fff;font-family:'Liberation Sans',sans-serif;">Сьогодні до ключових питань належать:</div>
<div class="t" style="left:817.30px;top:588.52px;font-size:22.80px;line-height:27.36px;letter-spacing:0.055px;font-weight:400;color:#fff;font-family:'Liberation Sans',sans-serif;">цифрова торгівля та потоки даних</div>
<div class="a" style="left:791.6px;top:603.0px;width:12.600px;height:2px;background:#fff"></div>
<div class="t" style="left:817.30px;top:633.12px;font-size:22.80px;line-height:27.36px;letter-spacing:0.035px;font-weight:400;color:#fff;font-family:'Liberation Sans',sans-serif;">торговельні правила, пов'язані з кліматом</div>
<div class="a" style="left:791.6px;top:648.0px;width:12.600px;height:2px;background:#fff"></div>
<div class="t" style="left:817.30px;top:677.72px;font-size:22.80px;line-height:27.36px;letter-spacing:0.019px;font-weight:400;color:#fff;font-family:'Liberation Sans',sans-serif;">безпека ланцюгів постачання</div>
<div class="a" style="left:791.6px;top:692.0px;width:12.600px;height:2px;background:#fff"></div>
<div class="t" style="left:817.30px;top:722.32px;font-size:22.80px;line-height:27.36px;letter-spacing:0.026px;font-weight:400;color:#fff;font-family:'Liberation Sans',sans-serif;">вплив збройних конфліктів на торгівлю (експортні</div>
<div class="a" style="left:791.6px;top:737.0px;width:12.600px;height:2px;background:#fff"></div>
<div class="t" style="left:817.30px;top:749.72px;font-size:22.80px;line-height:27.36px;letter-spacing:-0.016px;font-weight:400;color:#fff;font-family:'Liberation Sans',sans-serif;">коридори, режими санкцій, Чорноморська зернова</div>
<div class="t" style="left:817.30px;top:777.12px;font-size:22.80px;line-height:27.36px;letter-spacing:0.024px;font-weight:400;color:#fff;font-family:'Liberation Sans',sans-serif;">ініціатива)</div>
<div class="t" style="left:817.30px;top:821.72px;font-size:22.80px;line-height:27.36px;letter-spacing:0.023px;font-weight:400;color:#fff;font-family:'Liberation Sans',sans-serif;">геополітична напруженість між США та Китаєм</div>
<div class="a" style="left:791.6px;top:836.0px;width:12.600px;height:2px;background:#fff"></div>
<div class="t" style="left:790.30px;top:866.32px;font-size:22.80px;line-height:27.36px;letter-spacing:0.106px;font-weight:400;color:#fff;font-family:'Liberation Sans',sans-serif;">Ці дебати формують сучасну торговельну політику.</div>
<div class="a" style="left:765.8px;top:877.2px;width:6.400px;height:6.400px;border-radius:50%;background:#fff"></div>
<div class="t" style="left:1176.60px;top:967.11px;font-size:18.90px;line-height:22.68px;letter-spacing:-0.612px;font-weight:400;color:#111;font-family:'Liberation Sans',sans-serif;">17</div>
<div class="a" style="left:1219.200px;top:950px;width:2.600px;height:43px;background:#2e8ba1"></div>
<svg class="a" style="left:1236px;top:940px;overflow:hidden" width="104" height="52" viewBox="1236 940 104 52">
<g font-family="'Liberation Serif',serif" fill="#164a92" stroke="#164a92" stroke-width=".500">
<text x="1242.800" y="987" font-size="58" textLength="16.500" lengthAdjust="spacingAndGlyphs">J</text>
<text x="1257.500" y="972.800" font-size="32.800" textLength="72" lengthAdjust="spacingAndGlyphs">ONES</text>
<text x="1260.500" y="998.800" font-size="34.200" textLength="29.500" lengthAdjust="spacingAndGlyphs">D</text>
<text x="1289" y="998.800" font-size="32.800" textLength="36" lengthAdjust="spacingAndGlyphs">AY</text>
</g><rect x="1261" y="948.800" width="68.300" height="1" fill="#164a92"/></svg>
<div class="a" style="left:26px;top:992px;width:1374px;height:32px;background:linear-gradient(90deg,#41607a 0%,#46647c 50%,#48667d 100%)"></div>
<div class="t" style="left:1361.80px;top:998.83px;font-size:8.00px;line-height:9.60px;letter-spacing:-0.044px;font-weight:400;color:#dfe6ec;font-family:'Liberation Sans',sans-serif;">16:47</div>
<div class="t" style="left:1338.50px;top:1010.43px;font-size:8.00px;line-height:9.60px;letter-spacing:0.326px;font-weight:400;color:#dfe6ec;font-family:'Liberation Sans',sans-serif;">12/03/2026</div>
<div class="a" style="left:42.5px;top:1003.0px;width:6.8px;height:6.8px;background:#4cc2ff;border-radius:0.5px;"></div>
<div class="a" style="left:49.8px;top:1003.0px;width:6.8px;height:6.8px;background:#4cc2ff;border-radius:0.5px;"></div>
<div class="a" style="left:42.5px;top:1010.3px;width:6.8px;height:6.8px;background:#4cc2ff;border-radius:0.5px;"></div>
<div class="a" style="left:49.8px;top:1010.3px;width:6.8px;height:6.8px;background:#4cc2ff;border-radius:0.5px;"></div>
<svg class="a" style="left:75px;top:1001px" width="16" height="17"><circle cx="6.500" cy="6.500" r="5" fill="none" stroke="#c7d0d8" stroke-width="1.500"/><path d="M10.200 10.500l4.600 5" stroke="#c7d0d8" stroke-width="1.600"/></svg>
<div class="a" style="left:107.0px;top:1002.0px;width:11.0px;height:12.0px;background:#5c5c60;border-radius:1.0px;"></div>
<div class="a" style="left:111.0px;top:1004.0px;width:10.0px;height:12.0px;background:#8a8a8f;border-radius:1.0px;"></div>
<div class="a" style="left:139.0px;top:1001.0px;width:14.0px;height:12.0px;background:#1f7fc4;border-radius:2.0px;"></div>
<div class="a" style="left:141.0px;top:1014.0px;width:10.0px;height:1.5px;background:#8fc7ee;border-radius:1.0px;"></div>
<div class="a" style="left:169.0px;top:1002.0px;width:16.0px;height:13.0px;background:#c79a2d;border-radius:1.5px;"></div>
<div class="a" style="left:173.0px;top:1009.0px;width:8.0px;height:6.0px;background:#2b7bd0;border-radius:1.0px;"></div>
<div class="a" style="left:173.0px;top:1016.0px;width:9.0px;height:1.5px;background:#8fc7ee;border-radius:1.0px;"></div>
<div class="a" style="left:200.0px;top:1001.0px;width:14.0px;height:14.0px;background:#2b7cd3;border-radius:2.5px;"></div>
<div class="a" style="left:200.0px;top:1007.0px;width:8.0px;height:8.0px;background:#1a4f9c;border-radius:1.5px;"></div>
<div class="a" style="left:204.0px;top:1017.0px;width:6.0px;height:1.5px;background:#9fb3c4;border-radius:1.0px;"></div>
<div class="a" style="left:231px;top:1002px;width:17px;height:13px;border-radius:50%;background:#1111c8;border:1px solid #3f74ef"></div>
<div class="t" style="left:235.72px;top:1003.75px;font-size:8.50px;line-height:10.20px;letter-spacing:0.000px;font-weight:700;color:#fff;font-family:'Liberation Sans',sans-serif;">m</div>
<div class="a" style="left:262px;top:1000.500px;width:17px;height:17px;border-radius:50%;background:#31506a;border:1.400px solid #eef2f5"></div><div class="a" style="left:265.500px;top:1004px;width:10px;height:10px;border-radius:50%;background:#e8ecee"></div>
<div class="a" style="left:287.0px;top:994.0px;width:27.0px;height:28.0px;background:rgba(255,255,255,.055);border-radius:3.0px;"></div>
<div class="a" style="left:293.0px;top:1001.0px;width:17.0px;height:17.0px;background:#f3f5f8;border-radius:0.5px;"></div>
<div class="t" style="left:293.50px;top:1001.80px;font-size:15.00px;line-height:18.00px;letter-spacing:0.086px;font-weight:400;color:#16305e;font-family:'Liberation Serif',serif;">IN</div>
<div class="a" style="left:326.0px;top:1001.0px;width:16.0px;height:16.0px;background:#0b0b0b;border-radius:1.0px;"></div>
<div class="t" style="left:328.75px;top:1001.72px;font-size:13.50px;line-height:16.20px;letter-spacing:0.000px;font-weight:700;color:#fff;font-family:'Liberation Serif',serif;">H</div>
<div class="a" style="left:331.0px;top:1020.5px;width:5.0px;height:1.5px;background:#9fb3c4;border-radius:1.0px;"></div>
<div class="a" style="left:354.0px;top:994.0px;width:27.0px;height:28.0px;background:rgba(255,255,255,.055);border-radius:3.0px;"></div>
<div class="a" style="left:359.0px;top:1005.0px;width:9.0px;height:10.0px;background:#4b53bc;border-radius:2.0px;"></div>
<div class="a" style="left:363px;top:1001px;width:7px;height:7px;border-radius:50%;background:#7b83eb"></div>
<div class="a" style="left:365.0px;top:1008.0px;width:8.0px;height:8.0px;background:#6a72dd;border-radius:2.0px;"></div>
<div class="a" style="left:366.500px;top:997px;width:9px;height:9px;border-radius:50%;background:#d13438"></div>
<div class="t" style="left:369.05px;top:997.67px;font-size:7.00px;line-height:8.40px;letter-spacing:0.000px;font-weight:400;color:#fff;font-family:'Liberation Sans',sans-serif;">2</div>
<div class="a" style="left:359.0px;top:1020.5px;width:10.0px;height:1.8px;background:#7fc3ef;border-radius:1.0px;"></div>
<div class="a" style="left:388px;top:1000.500px;width:17px;height:17px;border-radius:50%;background:#1f6df2"></div>
<div class="t" style="left:390.94px;top:1003.93px;font-size:8.00px;line-height:9.60px;letter-spacing:0.000px;font-weight:700;color:#fff;font-family:'Liberation Sans',sans-serif;">zm</div>
<div class="a" style="left:394.0px;top:1020.5px;width:5.0px;height:1.5px;background:#9fb3c4;border-radius:1.0px;"></div>
<div class="a" style="left:420px;top:1001px;width:16px;height:16px;border-radius:50%;background:conic-gradient(from -60deg,#ea4335 0 120deg,#fbbc05 0 240deg,#34a853 0 360deg)"></div><div class="a" style="left:424.500px;top:1005.500px;width:7px;height:7px;border-radius:50%;background:#4285f4;border:1.200px solid #fff"></div>
<div class="a" style="left:425.5px;top:1020.5px;width:5.0px;height:1.5px;background:#9fb3c4;border-radius:1.0px;"></div>
<div class="a" style="left:451.0px;top:1001.0px;width:16.0px;height:16.0px;background:#0b1420;border-radius:3.5px;"></div>
<div class="a" style="left:453.500px;top:1005px;width:11px;height:8px;border-radius:50%;border:2px solid #23b8e8"></div>
<div class="a" style="left:482.500px;top:1001px;width:16px;height:16px;border-radius:4px;background:#21c2e8"></div><div class="a" style="left:485.500px;top:1004px;width:10px;height:10px;border-radius:50%;background:#fff;border:1.500px solid #1390b8"></div>
<div class="a" style="left:513.500px;top:1002px;width:17px;height:13px;border-radius:50%;background:#1111c8;border:1px solid #3f74ef"></div>
<div class="t" style="left:518.22px;top:1003.75px;font-size:8.50px;line-height:10.20px;letter-spacing:0.000px;font-weight:700;color:#fff;font-family:'Liberation Sans',sans-serif;">m</div>
<div class="a" style="left:545px;top:1001px;width:16px;height:16px;border-radius:50%;background:conic-gradient(#f4a23b 0 120deg,#e8532e 0 250deg,#d83b2b 0 360deg)"></div>
<div class="a" style="left:545.0px;top:1009.0px;width:8.0px;height:8.0px;background:#c43e1c;border-radius:1.5px;"></div>
<div class="a" style="left:550.5px;top:1020.5px;width:5.0px;height:1.5px;background:#9fb3c4;border-radius:1.0px;"></div>
<div class="a" style="left:577.0px;top:1001.0px;width:12.0px;height:12.0px;background:#f2efe9;border-radius:1.5px;border:1.500px solid #c73a2a"></div>
<div class="a" style="left:586px;top:1008px;width:7px;height:7px;border-radius:50%;background:#3aa0d8"></div>
<div class="a" style="left:582.5px;top:1020.5px;width:5.0px;height:1.5px;background:#9fb3c4;border-radius:1.0px;"></div>
<div class="a" style="left:269.500px;top:961px;width:44px;height:21px;border-radius:3.500px;background:#2c2c2c;box-shadow:0 1px 3px rgba(0,0,0,.35)"></div>
<div class="t" style="left:276.50px;top:965.91px;font-size:9.60px;line-height:11.52px;letter-spacing:-0.319px;font-weight:400;color:#f2f2f2;font-family:'Liberation Sans',sans-serif;">Intranet</div>
<div class="a" style="left:17px;top:980px;width:180px;height:33px;border-radius:5px;background:rgba(8,8,8,.5)"></div>
<div class="t" style="left:25.50px;top:987.68px;font-size:16.40px;line-height:19.68px;letter-spacing:0.018px;font-weight:400;color:#fff;font-family:'Liberation Sans',sans-serif;">Arsov, Dimiter</div>
<svg class="a" style="left:136.50px;top:987.50px;color:#fff;" width="19.00" height="19.00"><use href="#i-guest" width="19.00" height="19.00"/></svg>
<div class="t" style="left:145.90px;top:995.31px;font-size:9.50px;line-height:11.40px;letter-spacing:0.000px;font-weight:700;color:#444;font-family:'Liberation Sans',sans-serif;">?</div>
<svg class="a" style="left:169.50px;top:987.50px;color:#fff;" width="18.50" height="18.50"><use href="#i-micoff-w" width="18.50" height="18.50"/></svg>
<svg class="a" style="left:291.500px;top:1008px" width="9" height="14" viewBox="0 0 9 14"><path d="M.6.6v11l2.600-2.400 1.800 4 1.500-.7-1.800-3.900h3.500z" fill="#fff" stroke="#222" stroke-width=".700"/></svg>
<div class="a" id="panelline"></div>
<svg class="a" style="left:1462.80px;top:161.30px;color:#424242;" width="9.50" height="17.00"><use href="#i-chev-l" width="9.50" height="17.00"/></svg>
<div class="t" style="left:1491.30px;top:159.68px;font-size:18.30px;line-height:21.96px;letter-spacing:-0.010px;font-weight:700;color:#242424;font-family:'Liberation Sans',sans-serif;">Учасники</div>
<div class="t" style="left:1582.70px;top:159.68px;font-size:18.30px;line-height:21.96px;letter-spacing:-0.386px;font-weight:400;color:#616161;font-family:'Liberation Sans',sans-serif;">(73)</div>
<svg class="a" style="left:1863.00px;top:162.00px;color:#242424;" width="16.00" height="16.00"><use href="#i-x" width="16.00" height="16.00"/></svg>
<div class="a" style="left:1426px;top:209px;width:494px;height:1px;background:#e0e0e0"></div>
<div class="a" style="left:1426px;top:231px;width:494px;height:799px;overflow:hidden">
<div class="av" style="left:29.0px;top:-11.0px;width:44px;height:44px;background:#cdeadb"></div>
<div class="t" style="left:35.50px;top:1.40px;font-size:16.80px;line-height:20.16px;letter-spacing:0.000px;font-weight:400;color:#1d5e42;font-family:'Liberation Sans',sans-serif;transform:scaleX(1.0935);transform-origin:0 50%;-webkit-text-stroke:0.500px #1d5e42;">ДЮ</div>
<div class="t" style="left:90.20px;top:2.01px;font-size:18.80px;line-height:22.56px;letter-spacing:0.245px;font-weight:400;color:#242424;font-family:'Liberation Sans',sans-serif;">Дятел Андрій Юрійович</div>
<svg class="a" style="left:383.80px;top:0.50px;color:#c9c9c9;" width="24.40" height="22.50"><use href="#i-camoff" width="24.40" height="22.50"/></svg>
<svg class="a" style="left:421.50px;top:-1.30px;color:#242424;" width="24.00" height="24.00"><use href="#i-micoff" width="24.00" height="24.00"/></svg>
<div class="av" style="left:29.0px;top:55.0px;width:44px;height:44px;background:#cdeadb"></div>
<div class="t" style="left:45.40px;top:67.40px;font-size:16.80px;line-height:20.16px;letter-spacing:0.000px;font-weight:400;color:#1d5e42;font-family:'Liberation Sans',sans-serif;-webkit-text-stroke:0.500px #1d5e42;">Е</div>
<div class="t" style="left:90.20px;top:68.01px;font-size:18.80px;line-height:22.56px;letter-spacing:-0.808px;font-weight:400;color:#242424;font-family:'Liberation Sans',sans-serif;">Едуард</div>
<svg class="a" style="left:158.30px;top:66.50px;color:#1f1f1f;" width="19.50" height="19.50"><use href="#i-guest" width="19.50" height="19.50"/></svg>
<div class="t" style="left:167.65px;top:75.14px;font-size:10.00px;line-height:12.00px;letter-spacing:0.000px;font-weight:700;color:#fff;font-family:'Liberation Sans',sans-serif;">?</div>
<svg class="a" style="left:383.80px;top:66.50px;color:#c9c9c9;" width="24.40" height="22.50"><use href="#i-camoff" width="24.40" height="22.50"/></svg>
<svg class="a" style="left:421.50px;top:64.70px;color:#242424;" width="24.00" height="24.00"><use href="#i-micoff" width="24.00" height="24.00"/></svg>
<svg class="a" style="left:29.0px;top:121.0px" width="44" height="44" viewBox="0 0 44 44"><defs><clipPath id="cp3"><circle cx="22" cy="22" r="22"/></clipPath><filter id="bp"><feGaussianBlur stdDeviation="0.900"/></filter></defs>
<g clip-path="url(#cp3)"><rect width="44" height="44" fill="#2a2226"/><g filter="url(#bp)">
<path d="M19 30c0-16 3-27 11-27 9 0 13 12 12 36l-10 2z" fill="#86675a"/>
<ellipse cx="28" cy="15.500" rx="5" ry="8" fill="#e0b7a6" transform="rotate(12 28 15.500)"/>
<path d="M24 10c3-4 8-4 10 0l-1-5c-3-2-7-2-9 1z" fill="#7a5a4c"/>
<path d="M27 19.500l4 .5" stroke="#b23a44" stroke-width="1.600"/>
<path d="M7 16c3-3 8-2 10 2 1 4-1 8-4 11-4-2-7-7-6-13z" fill="#ea4d5c"/>
<path d="M0 26c6-2 12 0 18-2 6 2 12 0 18 4l-2 14H4z" fill="#d8dcd6"/>
<circle cx="12" cy="33" r="1.800" fill="#2f4a3a"/><circle cx="22" cy="29" r="1.800" fill="#2f4a3a"/><circle cx="28" cy="35" r="1.600" fill="#2f4a3a"/><circle cx="17" cy="39" r="1.500" fill="#3a3a3a"/>
<rect x="41" y="23" width="4" height="8" fill="#2aa878"/>
<ellipse cx="22" cy="42" rx="5" ry="3.500" fill="#5a1020"/></g></g></svg>
<div class="t" style="left:90.20px;top:134.01px;font-size:18.80px;line-height:22.56px;letter-spacing:-0.308px;font-weight:400;color:#242424;font-family:'Liberation Sans',sans-serif;">Заглядська Яна Вячеславівна</div>
<svg class="a" style="left:383.80px;top:132.50px;color:#c9c9c9;" width="24.40" height="22.50"><use href="#i-camoff" width="24.40" height="22.50"/></svg>
<svg class="a" style="left:421.50px;top:130.70px;color:#242424;" width="24.00" height="24.00"><use href="#i-micoff" width="24.00" height="24.00"/></svg>
<div class="av" style="left:29.0px;top:187.0px;width:44px;height:44px;background:#d8e4ec"></div>
<div class="t" style="left:37.25px;top:199.40px;font-size:16.80px;line-height:20.16px;letter-spacing:0.000px;font-weight:400;color:#2c4a5e;font-family:'Liberation Sans',sans-serif;transform:scaleX(1.0141);transform-origin:0 50%;-webkit-text-stroke:0.500px #2c4a5e;">ЗЮ</div>
<div class="t" style="left:90.20px;top:200.01px;font-size:18.80px;line-height:22.56px;letter-spacing:0.215px;font-weight:400;color:#242424;font-family:'Liberation Sans',sans-serif;">Зайцев Артем Юрійович</div>
<svg class="a" style="left:383.80px;top:198.50px;color:#c9c9c9;" width="24.40" height="22.50"><use href="#i-camoff" width="24.40" height="22.50"/></svg>
<svg class="a" style="left:421.50px;top:196.70px;color:#242424;" width="24.00" height="24.00"><use href="#i-micoff" width="24.00" height="24.00"/></svg>
<div class="av" style="left:29.0px;top:253.0px;width:44px;height:44px;background:#e8cdd3"></div>
<div class="t" style="left:43.50px;top:265.40px;font-size:16.80px;line-height:20.16px;letter-spacing:0.000px;font-weight:400;color:#6e1c2c;font-family:'Liberation Sans',sans-serif;transform:scaleX(0.9450);transform-origin:0 50%;-webkit-text-stroke:0.500px #6e1c2c;">ІВ</div>
<div class="t" style="left:90.20px;top:266.01px;font-size:18.80px;line-height:22.56px;letter-spacing:-0.047px;font-weight:400;color:#242424;font-family:'Liberation Sans',sans-serif;">Іванова Валерія Володимирів...</div>
<svg class="a" style="left:383.80px;top:264.50px;color:#c9c9c9;" width="24.40" height="22.50"><use href="#i-camoff" width="24.40" height="22.50"/></svg>
<svg class="a" style="left:421.50px;top:262.70px;color:#242424;" width="24.00" height="24.00"><use href="#i-micoff" width="24.00" height="24.00"/></svg>
<div class="av" style="left:29.0px;top:319.0px;width:44px;height:44px;background:#ead3e3"></div>
<div class="t" style="left:43.50px;top:331.40px;font-size:16.80px;line-height:20.16px;letter-spacing:0.000px;font-weight:400;color:#6b1f5a;font-family:'Liberation Sans',sans-serif;transform:scaleX(0.9450);transform-origin:0 50%;-webkit-text-stroke:0.500px #6b1f5a;">ІВ</div>
<div class="t" style="left:90.20px;top:332.01px;font-size:18.80px;line-height:22.56px;letter-spacing:0.354px;font-weight:400;color:#242424;font-family:'Liberation Sans',sans-serif;">Іванок Ігор Володимирович</div>
<svg class="a" style="left:383.80px;top:330.50px;color:#c9c9c9;" width="24.40" height="22.50"><use href="#i-camoff" width="24.40" height="22.50"/></svg>
<svg class="a" style="left:421.50px;top:328.70px;color:#242424;" width="24.00" height="24.00"><use href="#i-micoff" width="24.00" height="24.00"/></svg>
<svg class="a" style="left:29.0px;top:385.0px" width="44" height="44" viewBox="0 0 44 44"><defs><clipPath id="cp7"><circle cx="22" cy="22" r="22"/></clipPath></defs>
<g clip-path="url(#cp7)"><rect width="44" height="44" fill="#e6e2de"/><g filter="url(#bp)">
<rect x="0" y="6" width="10" height="24" fill="#cfccd0"/>
<path d="M15 30c-2-18 2-31 11-31 8 0 10 12 8 28l-6 6z" fill="#5b4a3c"/>
<path d="M9 26c0-12 3-20 8-23l2 2c-3 6-4 14-3 22z" fill="#c9b9a2"/>
<ellipse cx="24.500" cy="18" rx="7" ry="10" fill="#dfa999" transform="rotate(-8 24.500 18)"/>
<path d="M18 13c3-5 10-6 14-2-2-5-6-7-10-6-3 1-4 4-4 8z" fill="#5b4a3c"/>
<path d="M19.500 15l4 .5M27 15l4-.5" stroke="#4a332c" stroke-width="1.300"/>
<path d="M23 23.500l4.500 0" stroke="#c4525a" stroke-width="2"/>
<rect x="33" y="19" width="12" height="5" fill="#1c2a26"/>
<path d="M28 26c5-3 11-3 17-2v22H24z" fill="#df2a20"/>
<path d="M2 28c3-1 6 0 8 2l-1 10-6-2z" fill="#e0475a"/>
<path d="M18 32l5 12h5l1-13z" fill="#d8a090"/>
<ellipse cx="15" cy="32" rx="6" ry="7" fill="#e6c6be"/>
<ellipse cx="17.500" cy="38.500" rx="2" ry="3" fill="#5f6f8e"/>
<circle cx="36" cy="31" r="1.500" fill="#f0d8d0"/><circle cx="31" cy="39" r="1.800" fill="#f0d8d0"/></g></g></svg>
<div class="t" style="left:90.20px;top:398.01px;font-size:18.80px;line-height:22.56px;letter-spacing:0.019px;font-weight:400;color:#242424;font-family:'Liberation Sans',sans-serif;">Івусь Тетяна Ігорівна</div>
<svg class="a" style="left:383.80px;top:396.50px;color:#c9c9c9;" width="24.40" height="22.50"><use href="#i-camoff" width="24.40" height="22.50"/></svg>
<svg class="a" style="left:421.50px;top:394.70px;color:#242424;" width="24.00" height="24.00"><use href="#i-micoff" width="24.00" height="24.00"/></svg>
<div class="av" style="left:29.0px;top:451.0px;width:44px;height:44px;background:#fbe4cf"></div>
<div class="t" style="left:40.50px;top:463.40px;font-size:16.80px;line-height:20.16px;letter-spacing:0.000px;font-weight:400;color:#8f5a24;font-family:'Liberation Sans',sans-serif;transform:scaleX(1.0004);transform-origin:0 50%;-webkit-text-stroke:0.500px #8f5a24;">КВ</div>
<div class="t" style="left:90.20px;top:464.01px;font-size:18.80px;line-height:22.56px;letter-spacing:-0.041px;font-weight:400;color:#242424;font-family:'Liberation Sans',sans-serif;">Кальян Володимир Володим...</div>
<svg class="a" style="left:383.80px;top:462.50px;color:#c9c9c9;" width="24.40" height="22.50"><use href="#i-camoff" width="24.40" height="22.50"/></svg>
<svg class="a" style="left:421.50px;top:460.70px;color:#242424;" width="24.00" height="24.00"><use href="#i-micoff" width="24.00" height="24.00"/></svg>
<div class="av" style="left:29.0px;top:517.0px;width:44px;height:44px;background:#fad9d4"></div>
<div class="t" style="left:40.50px;top:529.40px;font-size:16.80px;line-height:20.16px;letter-spacing:0.000px;font-weight:400;color:#8c2f22;font-family:'Liberation Sans',sans-serif;transform:scaleX(0.9606);transform-origin:0 50%;-webkit-text-stroke:0.500px #8c2f22;">КЄ</div>
<div class="t" style="left:90.20px;top:530.01px;font-size:18.80px;line-height:22.56px;letter-spacing:0.013px;font-weight:400;color:#242424;font-family:'Liberation Sans',sans-serif;">Керноз Неля Євгеніївна</div>
<svg class="a" style="left:383.80px;top:528.50px;color:#c9c9c9;" width="24.40" height="22.50"><use href="#i-camoff" width="24.40" height="22.50"/></svg>
<svg class="a" style="left:421.50px;top:526.70px;color:#242424;" width="24.00" height="24.00"><use href="#i-micoff" width="24.00" height="24.00"/></svg>
<div class="av" style="left:29.0px;top:583.0px;width:44px;height:44px;background:#d8e5ec"></div>
<div class="t" style="left:39.15px;top:595.40px;font-size:16.80px;line-height:20.16px;letter-spacing:0.000px;font-weight:400;color:#2c4a5e;font-family:'Liberation Sans',sans-serif;transform:scaleX(1.0841);transform-origin:0 50%;-webkit-text-stroke:0.500px #2c4a5e;">КП</div>
<div class="t" style="left:90.20px;top:596.01px;font-size:18.80px;line-height:22.56px;letter-spacing:0.075px;font-weight:400;color:#242424;font-family:'Liberation Sans',sans-serif;">Клинова Ганна Петрівна</div>
<svg class="a" style="left:383.80px;top:594.50px;color:#c9c9c9;" width="24.40" height="22.50"><use href="#i-camoff" width="24.40" height="22.50"/></svg>
<svg class="a" style="left:421.50px;top:592.70px;color:#242424;" width="24.00" height="24.00"><use href="#i-micoff" width="24.00" height="24.00"/></svg>
<div class="av" style="left:29.0px;top:649.0px;width:44px;height:44px;background:#f7d5cd"></div>
<div class="t" style="left:40.65px;top:661.40px;font-size:16.80px;line-height:20.16px;letter-spacing:0.000px;font-weight:400;color:#8c2f14;font-family:'Liberation Sans',sans-serif;transform:scaleX(0.9861);transform-origin:0 50%;-webkit-text-stroke:0.500px #8c2f14;">КР</div>
<div class="t" style="left:90.20px;top:662.01px;font-size:18.80px;line-height:22.56px;letter-spacing:0.210px;font-weight:400;color:#242424;font-family:'Liberation Sans',sans-serif;">Ковтун Денис Романович</div>
<svg class="a" style="left:383.80px;top:660.50px;color:#c9c9c9;" width="24.40" height="22.50"><use href="#i-camoff" width="24.40" height="22.50"/></svg>
<svg class="a" style="left:421.50px;top:658.70px;color:#242424;" width="24.00" height="24.00"><use href="#i-micoff" width="24.00" height="24.00"/></svg>
<svg class="a" style="left:29.0px;top:715.0px" width="44" height="44" viewBox="0 0 44 44"><defs><clipPath id="cp12"><circle cx="22" cy="22" r="22"/></clipPath>
<linearGradient id="vbg" x1=".7" y1="0" x2=".3" y2="1"><stop offset="0" stop-color="#070b16"/><stop offset=".4" stop-color="#111a33"/><stop offset=".62" stop-color="#4c5a8c"/><stop offset="1" stop-color="#7d86b4"/></linearGradient>
<radialGradient id="vball" cx=".42" cy=".25" r=".8"><stop offset="0" stop-color="#e9b694"/><stop offset=".3" stop-color="#c0703a"/><stop offset="1" stop-color="#8e4a22"/></radialGradient></defs>
<g clip-path="url(#cp12)"><rect width="44" height="44" fill="url(#vbg)"/><g filter="url(#bp)">
<circle cx="23.300" cy="22" r="13.600" fill="url(#vball)"/>
<path d="M9.500 21c5 4 10 3 14-1 4-5 8-6 11-5" fill="none" stroke="#141d4a" stroke-width="3.600" stroke-linecap="round"/>
<path d="M14 24c0 6 4 11 9 13l7 5" fill="none" stroke="#1a214a" stroke-width="2" stroke-linecap="round"/>
<path d="M20 9.500c2 3 2 8 0 12" fill="none" stroke="#9a5428" stroke-width="1"/></g></g></svg>
<div class="t" style="left:90.20px;top:728.01px;font-size:18.80px;line-height:22.56px;letter-spacing:0.215px;font-weight:400;color:#242424;font-family:'Liberation Sans',sans-serif;">Корсаков Іван Сергійович</div>
<svg class="a" style="left:383.80px;top:726.50px;color:#c9c9c9;" width="24.40" height="22.50"><use href="#i-camoff" width="24.40" height="22.50"/></svg>
<svg class="a" style="left:421.50px;top:724.70px;color:#242424;" width="24.00" height="24.00"><use href="#i-micoff" width="24.00" height="24.00"/></svg>
<div class="av" style="left:29.0px;top:781.0px;width:44px;height:44px;background:#fad9d4"></div>
<div class="t" style="left:40.50px;top:793.40px;font-size:16.80px;line-height:20.16px;letter-spacing:0.000px;font-weight:400;color:#8c2f22;font-family:'Liberation Sans',sans-serif;transform:scaleX(0.9664);transform-origin:0 50%;-webkit-text-stroke:0.500px #8c2f22;">КС</div>
<div class="t" style="left:90.20px;top:794.01px;font-size:18.80px;line-height:22.56px;letter-spacing:-0.411px;font-weight:400;color:#242424;font-family:'Liberation Sans',sans-serif;">Косенко Дарина Валеріївна</div>
<svg class="a" style="left:383.80px;top:792.50px;color:#c9c9c9;" width="24.40" height="22.50"><use href="#i-camoff" width="24.40" height="22.50"/></svg>
<svg class="a" style="left:421.50px;top:790.70px;color:#242424;" width="24.00" height="24.00"><use href="#i-micoff" width="24.00" height="24.00"/></svg>
</div>
<div class="a" style="left:1906px;top:437px;width:9px;height:121px;border-radius:4.500px;background:#7b7b7b"></div>
<div class="a" id="taskbar"></div>
<div class="a" style="left:250px;top:1030px;width:61px;height:50px;background:rgba(255,255,255,.21)"></div>
<div class="a" style="left:69.5px;top:1077px;width:39.0px;height:3px;background:#76b9ed"></div>
<div class="a" style="left:109.5px;top:1077px;width:10.5px;height:3px;background:#5d8fb9"></div>
<div class="a" style="left:193.0px;top:1077px;width:50.7px;height:3px;background:#76b9ed"></div>
<div class="a" style="left:250.0px;top:1077px;width:61.0px;height:3px;background:#76b9ed"></div>
<div class="a" style="left:316.8px;top:1077px;width:50.7px;height:3px;background:#76b9ed"></div>
<div class="a" style="left:108.500px;top:1077px;width:1px;height:3px;background:#2a4456"></div>
<svg class="a" style="left:20px;top:1044px" width="21" height="22" viewBox="0 0 21 22"><g fill="#fff">
<path d="M0 3.300l8.300-1.200v8.200H0z"/><path d="M9.400 1.900L20.400.300v10H9.400z"/><path d="M0 11.400h8.300v8.200L0 18.400z"/><path d="M9.400 11.400h11v10l-11-1.600z"/></g></svg>
<svg class="a" style="left:80px;top:1042px" width="28" height="24" viewBox="0 0 28 24">
<path d="M1.200 2.200a1.200 1.200 0 0 1 1.200-1.200h7.400l2.200 2.200h13.600a1.200 1.200 0 0 1 1.200 1.200v2H1.200z" fill="#e2a928"/>
<rect x="0.500" y="4.600" width="27" height="17.200" rx="1.200" fill="#fbd463"/>
<path d="M5.500 21.800v-8a1 1 0 0 1 1-1h15a1 1 0 0 1 1 1v8h-4.700v-4.200H10.200v4.200z" fill="#3b8de0"/>
<rect x="10.200" y="17.600" width="7.600" height="6" fill="#f7c948"/><rect x="5.500" y="21.800" width="17" height="1.700" fill="#2f78c8"/></svg>
<svg class="a" style="left:140.500px;top:1039.500px" width="31" height="31" viewBox="0 0 31 31"><defs>
<linearGradient id="eg1" x1="0" y1="0" x2="1" y2="1"><stop offset="0" stop-color="#35c1f1"/><stop offset=".5" stop-color="#2bc3a5"/><stop offset="1" stop-color="#6ad04a"/></linearGradient>
<linearGradient id="eg2" x1="0" y1="0" x2="0" y2="1"><stop offset="0" stop-color="#1c8fe0"/><stop offset="1" stop-color="#144fa8"/></linearGradient></defs>
<circle cx="15.500" cy="15.500" r="15" fill="url(#eg2)"/>
<path d="M.8 13.600C2 5.800 8 .5 15.500.5c8.500 0 14.800 6 14.800 12.600 0 4.400-3.200 7-7 7-3 0-4.600-1.200-4.600-2.400 0-1 1-1.400 1-3.200 0-2.600-2.600-4.800-6-4.800-5 0-9.600 3.200-12.900 3.900z" fill="url(#eg1)"/>
<path d="M12 30c-4.600-2.200-6.800-6.600-6.800-10.600 0-5 4-8.600 8.400-9.500-2.600 1.600-3.800 4.200-3.800 6.800 0 6 5.200 10 11 10 2.200 0 4.200-.6 5.600-1.400-2.800 3.800-8.400 7-14.400 4.700z" fill="#0f4ea8" opacity=".85"/></svg>
<svg class="a" style="left:202.500px;top:1039.500px" width="31" height="31" viewBox="0 0 31 31">
<circle cx="15.500" cy="15.500" r="15" fill="#fff"/>
<path d="M15.500.5a15 15 0 0 1 13 7.500H15.500a7.500 7.500 0 0 0-6.500 3.750L2.500 8A15 15 0 0 1 15.500.5z" fill="#e33b2e"/>
<path d="M28.500 8a15 15 0 0 1-13 22.500l6.500-11.250A7.500 7.500 0 0 0 22 11.750L28.500 8z" fill="#fbc116" transform="rotate(0 15.500 15.500)"/>
<path d="M28.500 8H15.500a7.500 7.500 0 0 1 6.500 11.250L15.500 30.500A15 15 0 0 0 28.500 8z" fill="#fbc116"/>
<path d="M2.500 8l6.500 11.250a7.500 7.500 0 0 0 6.500 3.750l-0 7.500A15 15 0 0 1 2.500 8z" fill="#2ba24c"/>
<path d="M9 19.250a7.500 7.500 0 0 0 13 0L15.500 30.500A15 15 0 0 1 2.500 8z" fill="#2ba24c"/>
<circle cx="15.500" cy="15.500" r="6.900" fill="#fff"/><circle cx="15.500" cy="15.500" r="5.500" fill="#4285f4"/></svg>
<svg class="a" style="left:265px;top:1040px" width="32" height="31" viewBox="0 0 32 31">
<circle cx="12.400" cy="5.600" r="4.600" fill="#8b92f0"/><circle cx="22.400" cy="7.800" r="3.300" fill="#6c73de"/>
<path d="M19 12.600h8.400a1.500 1.500 0 0 1 1.500 1.500v7.400a5 5 0 0 1-5 5 5 5 0 0 1-4.900-3.400z" fill="#5a61d0"/>
<path d="M6.500 11.400h12a1.700 1.700 0 0 1 1.700 1.700V22a7.200 7.200 0 0 1-13.700 3z" fill="#7b83eb"/>
<rect x="0" y="14.400" width="13.400" height="12.600" rx="1.800" fill="#4b53bc"/>
<path d="M3.400 17.600h6.600v1.800H7.700v5.400H5.800v-5.400H3.400z" fill="#fff"/></svg>
<div class="a" style="left:277px;top:1052px;width:19.500px;height:19.500px;border-radius:50%;background:#c4262e"></div>
<div class="t" style="left:282.44px;top:1052.63px;font-size:15.50px;line-height:18.60px;letter-spacing:0.000px;font-weight:400;color:#fff;font-family:'Liberation Sans',sans-serif;">2</div>
<svg class="a" style="left:328px;top:1041.500px" width="27" height="27" viewBox="0 0 27 27">
<rect x="8" y="2" width="18.500" height="23" rx="1.200" fill="#fff"/>
<g stroke="#2b579a" stroke-width="1.500"><path d="M17 6.600h7.600M17 10h7.600M17 13.500h7.600M17 17h7.600M17 20.500h7.600"/></g>
<path d="M0 3l15.600-2.700v26.400L0 24z" fill="#2b579a"/>
<path d="M2.900 8.800h2.100l1.300 6.500 1.500-6.500h1.900l1.500 6.500 1.300-6.500h2l-2.300 9.400H9.800L8.300 12l-1.500 6.200H4.700z" fill="#fff"/></svg>
<svg class="a" style="left:1550px;top:1050px" width="17" height="10" viewBox="0 0 17 10"><path d="M1 9l7.500-7.500L16 9" fill="none" stroke="#fff" stroke-width="1.400"/></svg>
<svg class="a" style="left:1581px;top:1046px" width="16" height="19" viewBox="0 0 16 19"><g fill="none" stroke="#fff" stroke-width="1.200">
<rect x="1" y="5" width="9" height="9" rx="1.500"/><path d="M10 8.300l4.500-2.300v7l-4.500-2.300"/><path d="M2.500 2.300a8 8 0 0 1 9 0M2.500 16.700a8 8 0 0 0 9 0"/></g></svg>
<svg class="a" style="left:1610.500px;top:1045px" width="14" height="20" viewBox="0 0 14 20"><rect x="3.700" y="0.500" width="6.600" height="11.500" rx="2.600" fill="#fff"/>
<path d="M1 9.500a6 6 0 0 0 12 0M7 15.500v3.300M3.500 19h7" fill="none" stroke="#fff" stroke-width="1.200"/></svg>
<svg class="a" style="left:1637px;top:1047px" width="22" height="15" viewBox="0 0 22 15"><g fill="none" stroke="#fff" stroke-width="1.200">
<rect x="3.600" y="4.600" width="16.500" height="8.800" rx="1"/><path d="M20.500 7.500v3"/></g><rect x="5.400" y="6.400" width="12.800" height="5.200" fill="#fff"/>
<path d="M1.600.5v2.500M4 .5v2.500M.8 3h4v2.200a2 2 0 0 1-4 0z" fill="#fff" stroke="#fff" stroke-width=".800"/></svg>
<svg class="a" style="left:1670.500px;top:1047.500px" width="17" height="17" viewBox="0 0 17 17"><g fill="none" stroke="#fff" stroke-width="1.300" stroke-linecap="round">
<path d="M1 15.500A14.500 14.500 0 0 1 15.500 1" opacity=".55"/><path d="M5 15.800A10.600 10.600 0 0 1 15.600 5.200"/><path d="M9 16A6.800 6.800 0 0 1 15.800 9.200"/></g><circle cx="14.500" cy="14.800" r="1.700" fill="#fff"/></svg>
<svg class="a" style="left:1698px;top:1046px" width="21" height="19" viewBox="0 0 21 19"><g fill="none" stroke="#fff" stroke-width="1.200" stroke-linejoin="round" stroke-linecap="round">
<path d="M1 6.800h3.400L9 2.500v14L4.400 12.200H1z"/><path d="M11.800 7.200a3.400 3.400 0 0 1 0 4.600M14.400 4.800a6.800 6.800 0 0 1 0 9.400M17 2.400a10.400 10.400 0 0 1 0 14.200"/></g></svg>
<div class="t" style="left:1732.30px;top:1047.19px;font-size:14.80px;line-height:17.76px;letter-spacing:0.000px;font-weight:400;color:#fff;font-family:'Liberation Sans',sans-serif;transform:scaleX(0.9142);transform-origin:0 50%;">УКР</div>
<div class="t" style="left:1794.00px;top:1035.59px;font-size:14.80px;line-height:17.76px;letter-spacing:0.000px;font-weight:400;color:#fff;font-family:'Liberation Sans',sans-serif;transform:scaleX(0.9072);transform-origin:0 50%;">17:47</div>
<div class="t" style="left:1777.00px;top:1058.59px;font-size:14.80px;line-height:17.76px;letter-spacing:0.000px;font-weight:400;color:#fff;font-family:'Liberation Sans',sans-serif;transform:scaleX(0.9315);transform-origin:0 50%;">12.03.2026</div>
<svg class="a" style="left:1869px;top:1045px" width="21" height="18" viewBox="0 0 21 18"><path d="M0 0h20.500v14H5.500L0 18z" fill="#fff"/>
<g stroke="#1c2a44" stroke-width="1.500"><path d="M3.500 3.800h13.500M3.500 7h13.500M3.500 10.200h9"/></g></svg>
<div class="a" style="left:1879px;top:1055px;width:19px;height:19px;border-radius:50%;background:#2a2e38;border:1.500px solid #8d9199"></div>
<div class="t" style="left:1884.88px;top:1057.00px;font-size:13.00px;line-height:15.60px;letter-spacing:0.000px;font-weight:700;color:#fff;font-family:'Liberation Sans',sans-serif;">1</div>
<div class="a" style="left:1913.500px;top:1030px;width:1px;height:50px;background:#6f7788"></div>
</body></html>
